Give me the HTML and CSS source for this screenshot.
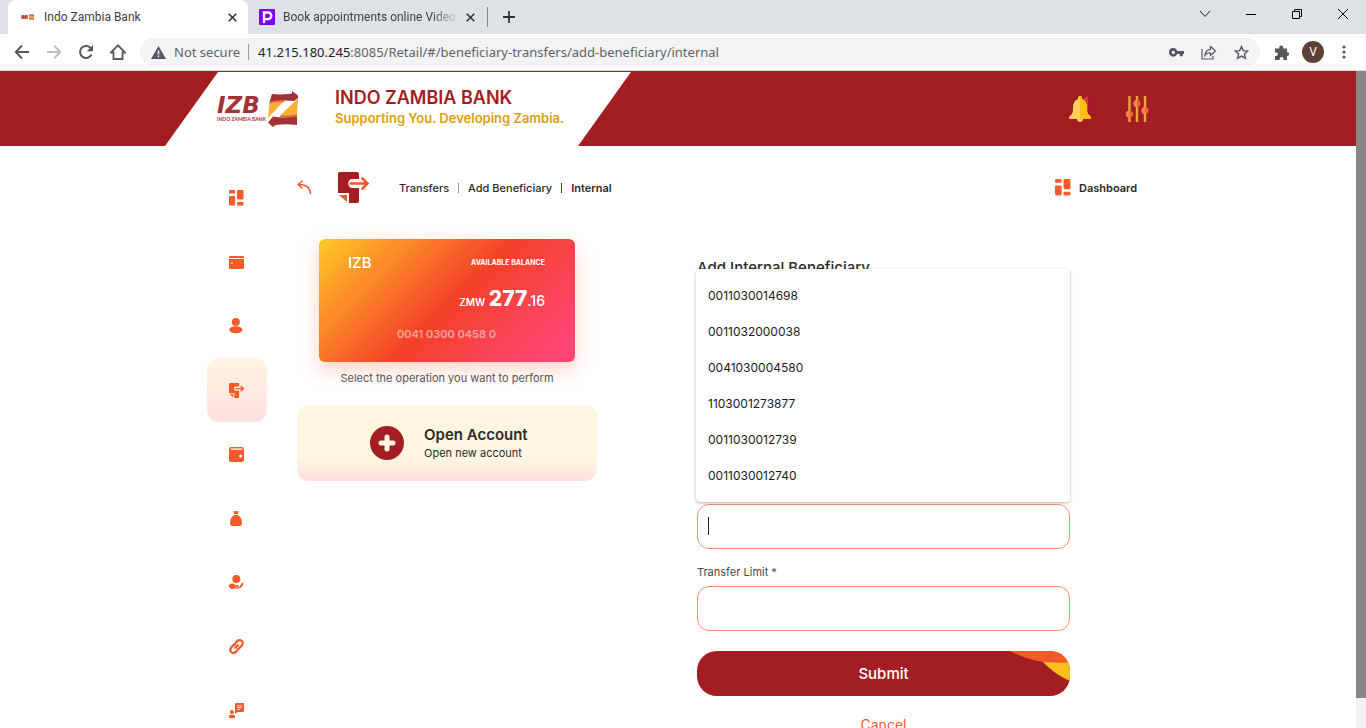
FILE: index.html
```html
<!DOCTYPE html>
<html lang="en">
<head>
<meta charset="utf-8">
<title>Indo Zambia Bank</title>
<link rel="stylesheet" href="styles.css">
</head>
<body>
<svg class="defs" aria-hidden="true">
  <symbol id="dash" viewBox="0 0 15 16"><rect width="6.2" height="3.6" rx="1.2"/><rect y="6" width="6.2" height="9.6" rx="1.4"/><rect x="8" width="6.5" height="9.6" rx="1.4"/><rect x="8" y="12" width="6.5" height="3.6" rx="1.2"/></symbol>
  <symbol id="izb" viewBox="0 0 31 36">
    <path fill="#a33236" d="M4 3Q13 4 24 2.500V0L30 4.500V7L26 10Q14 8.500 1.500 11z"/>
    <path fill="#fbb034" d="M1.500 12Q8 10.500 15 11L0 27z"/>
    <path fill="#ee6036" d="M1.500 10.600Q12 8.500 17 9.600L15.500 11.200Q8 10.800 1.500 12.400z"/>
    <path fill="#fbb034" d="M30 7.500L29 24Q20 25.500 12 24.500z"/>
    <path fill="#ee6036" d="M13 24.200Q20 25.300 29 23.600v1.800Q20 27 11.500 26z"/>
    <path fill="#a33236" d="M29 25.400V34Q18 32.500 7.500 34L5 36 0 31.500 5 25.500Q16 27.500 29 25.400z"/>
  </symbol>
</svg>

<div class="tabstrip">
  <div class="tab tab-active">
    <svg class="fav" viewBox="0 0 16 16"><path d="M1 6h7v4H1z" fill="#d98c86"/><path d="M2 8h5M3 6v4M6 6v4" stroke="#a33236"/><path d="M9 6h5v4H9z" fill="#f3a43a"/><path d="M9 6h5M9 10h5" stroke="#b8383a"/></svg>
    <span class="tab-title">Indo Zambia Bank</span>
    <button class="icon-btn" title="Close"><svg width="9" height="9" viewBox="0 0 9 9"><path d="M.7.7l7.600 7.600M8.300.7L.7 8.300" stroke="#333" stroke-width="1.600"/></svg></button>
  </div>
  <div class="tab">
    <svg class="fav" viewBox="0 0 16 16"><rect width="16" height="16" rx="1" fill="#7b00f8"/><path d="M5 14V3.500h4a3.300 3.300 0 010 6.600H5" fill="none" stroke="#fff" stroke-width="2.400"/></svg>
    <span class="tab-title tab-fade">Book appointments online Video</span>
    <button class="icon-btn" title="Close"><svg width="9" height="9" viewBox="0 0 9 9"><path d="M.7.7l7.600 7.600M8.300.7L.7 8.300" stroke="#333" stroke-width="1.600"/></svg></button>
  </div>
  <span class="tab-sep"></span>
  <button class="icon-btn new-tab" title="New tab"><svg width="12" height="12" viewBox="0 0 12 12"><path d="M6 0v12M0 6h12" stroke="#333" stroke-width="1.800"/></svg></button>
  <div class="win">
    <button class="icon-btn" title="Tabs"><svg width="12" height="12" viewBox="0 0 12 12"><path d="M1 3l5 5.500L11 3" fill="none" stroke="#222"/></svg></button>
    <button class="icon-btn" title="Minimize"><svg width="12" height="12" viewBox="0 0 12 12"><path d="M1 6.500h10" stroke="#000"/></svg></button>
    <button class="icon-btn" title="Restore"><svg width="12" height="12" viewBox="0 0 12 12"><path d="M1.500 3.500h7v7h-7zM3.500 3V1.500h7v7H9" fill="none" stroke="#000"/></svg></button>
    <button class="icon-btn" title="Close"><svg width="12" height="12" viewBox="0 0 12 12"><path d="M1 1l10 10M11 1L1 11" stroke="#000"/></svg></button>
  </div>
</div>

<div class="toolbar">
  <button class="icon-btn" title="Back"><svg width="16" height="16" viewBox="0 0 16 16"><path d="M15 8H2M8 1.500L1.800 8 8 14.500" fill="none" stroke="#55585c" stroke-width="1.900"/></svg></button>
  <button class="icon-btn" title="Forward"><svg width="16" height="16" viewBox="0 0 16 16"><path d="M1 8h13M8 1.500L14.200 8 8 14.500" fill="none" stroke="#bbbdc0" stroke-width="1.900"/></svg></button>
  <button class="icon-btn" title="Reload"><svg width="16" height="16" viewBox="0 0 16 16"><path d="M13.500 10.500A6 6 0 1112.300 3.700L13.500 5" fill="none" stroke="#55585c" stroke-width="2"/><path d="M15 1v6.200H8.800z" fill="#55585c"/></svg></button>
  <button class="icon-btn" title="Home"><svg width="16" height="16" viewBox="0 0 16 16"><path d="M1 8.500L8 1.400l7 7.100h-2.500V15h-9V8.500z" fill="none" stroke="#55585c" stroke-width="1.800"/></svg></button>
  <div class="omnibox">
    <svg width="15" height="13" viewBox="0 0 15 13"><path d="M7.500 0L15 13H0z" fill="#55585c"/><path d="M7.500 4.500v4M7.500 9.600v1.600" stroke="#f1f3f4" stroke-width="1.500"/></svg>
    <span class="secure">Not secure</span>
    <span class="url"><b>41.215.180.245</b>:8085/Retail/#/beneficiary-transfers/add-beneficiary/internal</span>
    <span class="omni-icons">
      <svg width="15" height="9" viewBox="0 0 15 9"><path fill="#55585c" fill-rule="evenodd" d="M4.300 0a4.200 4.200 0 013.900 3H15v3h-1.200v2.300h-3V6H8.200A4.300 4.300 0 114.300 0zm0 2.700a1.700 1.700 0 100 3.400 1.700 1.700 0 000-3.400z"/></svg>
      <svg width="16" height="15" viewBox="0 0 16 15"><path d="M1 4v10h11v-3M9.500 1.500L14.500 6l-5 4.500V8Q6 7.700 3.800 10.500 4.500 5 9.500 4.300z" fill="none" stroke="#55585c" stroke-width="1.200"/></svg>
      <svg width="15" height="15" viewBox="0 0 15 15"><path d="M7.500 1.500l1.800 4.100 4.500.4-3.400 3 1 4.400-3.900-2.300-3.900 2.300 1-4.400-3.400-3 4.500-.4z" fill="none" stroke="#55585c" stroke-width="1.400"/></svg>
    </span>
  </div>
  <svg class="ext" width="15" height="15" viewBox="0 0 15 15"><path fill="#55585c" d="M1 3.500h4.300V2.300a1.900 1.900 0 013.800 0v1.200H13v3.800h.3a1.800 1.800 0 010 3.600H13V15H9.500v-1a1.900 1.900 0 00-3.800 0v1H1v-4h1a1.800 1.800 0 000-3.600H1z"/></svg>
  <span class="avatar">V</span>
  <button class="icon-btn dots" title="Menu"><svg width="4" height="14" viewBox="0 0 4 14" fill="#55585c"><circle cx="2" cy="2" r="1.600"/><circle cx="2" cy="7" r="1.600"/><circle cx="2" cy="12" r="1.600"/></svg></button>
</div>

<div class="viewport">
  <div class="page">
    <header class="header">
      <div class="wrap header-row">
        <div class="brand">
          <div class="logo">
            <div class="logo-text"><span class="logo-big">IZB</span><span class="logo-small">INDO ZAMBIA BANK</span></div>
            <svg width="31" height="36"><use href="#izb"/></svg>
          </div>
          <div><div class="brand-name">INDO ZAMBIA BANK</div><div class="brand-tag">Supporting You. Developing Zambia.</div></div>
        </div>
        <div class="header-icons">
          <button class="icon-btn" title="Notifications"><svg width="27" height="27" viewBox="0 0 27 27"><circle cx="19" cy="7" r="6.500" fill="#a7152d"/><path d="M19 .5a6.500 6.500 0 000 13z" fill="#d03a45"/><path fill="#ffd05a" d="M11 0q2 0 2 2v1q5 2 5 9 0 6 2 7 2 1 2 4H0q0-3 2-4 2-1 2-7 0-7 5-9V2q0-2 2-2z"/><path fill="#fdc010" d="M11 0q2 0 2 2v1q5 2 5 9 0 6 2 7 2 1 2 4H11z"/><path fill="#ffd05a" d="M8 23h6q0 3-3 3t-3-3z"/></svg></button>
          <button class="icon-btn" title="Settings"><svg width="23" height="27" viewBox="0 0 23 27"><path d="M3.500 0v26M11 0v26M19 0v26" stroke="#e9a63b" stroke-width="2.400"/><g fill="#f4632f"><circle cx="3.500" cy="18" r="3.500"/><circle cx="11" cy="7.500" r="3.500"/><circle cx="19" cy="14.500" r="3.500"/></g><path fill="#ff8558" d="M3.500 14.500a3.500 3.500 0 000 7zM11 4a3.500 3.500 0 000 7zM19 11a3.500 3.500 0 000 7z"/></svg></button>
        </div>
      </div>
    </header>

    <div class="wrap body">
      <nav class="side">
        <a href="#" title="Dashboard"><svg width="15" height="16"><use href="#dash"/></svg></a>
        <a href="#"><svg width="15" height="13" viewBox="0 0 15 13"><path d="M1.200 0h12.600Q15 0 15 1.300V2H0v-.7Q0 0 1.200 0z"/><path fill-rule="evenodd" d="M0 3h15v8.700Q15 13 13.800 13H1.200Q0 13 0 11.700zm2.200 3.500v1.200h1.600V6.500z"/></svg></a>
        <a href="#"><svg width="15" height="16" viewBox="0 0 15 16"><circle cx="6.800" cy="4" r="4"/><ellipse cx="6.800" cy="11.800" rx="6.600" ry="3.500"/></svg></a>
        <a href="#" class="active" title="Transfers"><svg width="15" height="15" viewBox="0 0 31 31"><path d="M2 0h17q2 0 2 2v5h-8a5 5 0 000 9h8v13q0 2-2 2h-8V21H0V2Q0 0 2 0z"/><path d="M1 23h8v7z"/><path d="M13 11.500h16M24 6l6 5.500-6 5.500" fill="none" stroke="#f15a29" stroke-width="2.800"/></svg></a>
        <a href="#"><svg width="15" height="15" viewBox="0 0 15 15"><rect width="15" height="15" rx="2"/><path d="M2 1.300h11.500v1.700H1.500z" fill="#ffd7c9"/><circle cx="11.600" cy="9" r="1.500" fill="#fff"/></svg></a>
        <a href="#"><svg width="15" height="15" viewBox="0 0 15 15"><path d="M4 0q1.500.8 3 0 1.500.8 3 0L8.600 3.200H5.400zM5 4h4q4 2.500 4 8 0 3-2.500 3h-7Q1 15 1 12q0-5.500 4-8z"/></svg></a>
        <a href="#"><svg width="15" height="15" viewBox="0 0 15 15"><circle cx="7.300" cy="4" r="4"/><path d="M0 10q2-2 4.300-1.300L6.500 10h3q1 .8-.2 1.700H6v.5h4L13 8q1.800-.6 1.500.6-1.500 4.500-4.500 5H5l-2 1L0 12z"/></svg></a>
        <a href="#"><svg width="15" height="15" viewBox="0 0 15 15" fill="none" stroke="#f15a29" stroke-width="2.300"><path d="M5.500 9.500l4-4M6.300 4l2-1.900a3 3 0 014.500 4.400L10 9.300a3 3 0 01-2 .8M8.700 11l-2 1.900A3 3 0 012.200 8.500L5 5.700a3 3 0 012-.8"/></svg></a>
        <a href="#"><svg width="15" height="15" viewBox="0 0 15 15"><path d="M7 0h7q1 0 1 1v7q0 1-1 1H8.500L6 11V1q0-1 1-1z"/><circle cx="2.900" cy="9" r="2"/><path d="M0 15v-1.600Q0 11.500 3 11.500t3 2V15z"/><path d="M8 2.800h5M8 4.600h5M8 6.400h3" stroke="#fff" stroke-width=".8"/></svg></a>
      </nav>

      <main class="content">
        <div class="crumb-row">
          <button class="icon-btn" title="Back"><svg width="15" height="15" viewBox="0 0 15 15"><path d="M5.500.8L1 4.500l4.500 4M1 4.500Q13 4 13.500 14" fill="none" stroke="#f15a29" stroke-width="1.400"/></svg></button>
          <svg class="page-icon" width="31" height="31" viewBox="0 0 31 31"><path fill="#a31e22" d="M2 0h17q2 0 2 2v5h-8a5 5 0 000 9h8v13q0 2-2 2h-8V21H0V2Q0 0 2 0z"/><path fill="#f15a29" d="M1 23h8v7z"/><path d="M12.500 11.500H29M24.500 6.500l5 5-5 5" fill="none" stroke="#f15a29" stroke-width="2.600" stroke-linecap="round"/></svg>
          <nav class="crumbs"><a href="#">Transfers</a><i></i><a href="#">Add Beneficiary</a><i class="dark"></i><b>Internal</b></nav>
          <a href="#" class="dash-link"><svg width="16" height="17"><use href="#dash"/></svg>Dashboard</a>
        </div>

        <div class="columns">
          <section class="left">
            <div class="card">
              <div class="card-top"><span class="card-name">IZB</span><span class="card-label">AVAILABLE BALANCE</span></div>
              <div class="balance"><small>ZMW</small> <strong>277</strong><span>.16</span></div>
              <div class="number">0041 0300 0458 0</div>
            </div>
            <p class="hint">Select the operation you want to perform</p>
            <button class="open">
              <svg width="34" height="34" viewBox="0 0 34 34"><circle cx="17" cy="17" r="17" fill="#a31e22"/><path d="M17 11v12M11 17h12" stroke="#fff6e3" stroke-width="5" stroke-linecap="round"/></svg>
              <span><strong>Open Account</strong><span>Open new account</span></span>
            </button>
          </section>

          <form class="form">
            <h1 id="form-title">Add Internal Beneficiary</h1>
            <div class="field">
              <input type="text" aria-labelledby="form-title" autocomplete="off">
              <span class="caret"></span>
              <ul class="suggest">
                <li>0011030014698</li><li>0011032000038</li><li>0041030004580</li><li>1103001273877</li><li>0011030012739</li><li>0011030012740</li>
              </ul>
            </div>
            <label for="limit">Transfer Limit *</label>
            <input id="limit" type="text">
            <button type="button" class="submit">
              <svg width="60" height="45" viewBox="0 0 60 45"><path d="M32 10Q44 23 60 30V0H32z" fill="#fec01f"/><path d="M0 0Q28 15 60 11V0z" fill="#f15a29"/></svg>
              <span>Submit</span>
            </button>
            <button type="button" class="cancel">Cancel</button>
          </form>
        </div>
      </main>
    </div>
  </div>
  <div class="scroll"><div class="thumb"></div></div>
</div>
</body>
</html>
```
FILE: styles.css
```css
* { box-sizing: border-box; }
body {
  margin: 0;
  height: 100vh;
  display: flex;
  flex-direction: column;
  overflow: hidden;
  background: #fff;
  color: #2a2a2a;
  font-family: Inter, sans-serif;
  font-size: 11px;
}
a { color: inherit; text-decoration: none; }
svg { display: block; flex: none; }
.defs { position: absolute; width: 0; height: 0; }
.icon-btn { display: flex; align-items: center; justify-content: center; padding: 0; border: 0; background: none; }

/* browser frame */
.tabstrip, .toolbar { display: flex; align-items: center; flex: none; font-family: "Noto Sans", sans-serif; }
.tabstrip { height: 34px; padding-left: 8px; background: #dee1e6; font-family: Roboto, sans-serif; font-size: 12px; color: #3c4043; }
.tab { display: flex; align-items: center; width: 239px; height: 34px; padding: 0 12px 0 11px; gap: 8px; }
.tab-active { width: 240px; padding: 0 11px 0 12px; background: #fff; border-radius: 8px 8px 0 0; }
.fav { width: 16px; height: 16px; }
.tab-title { flex: 1; white-space: nowrap; overflow: hidden; }
.tab-fade { mask-image: linear-gradient(to right, #000 85%, transparent); }
.tab-sep { width: 1px; height: 20px; background: #85888c; }
.new-tab { margin-left: 15px; }
.win { display: flex; gap: 34px; margin-left: auto; padding: 0 17px 6px 0; }
.toolbar { height: 37px; padding: 0 20px 0 14px; border-bottom: 1px solid #d8dbdb; gap: 16px; }
.omnibox { display: flex; align-items: center; flex: 1; height: 28px; padding: 0 11px; margin-left: -2px; border-radius: 14px; background: #f1f3f4; color: #5f6368; font-size: 13px; white-space: nowrap; }
.secure { margin-left: 8px; padding-right: 8px; border-right: 1px solid #9a9da1; line-height: 16px; }
.url { margin-left: 9px; }
.url b { font-weight: 400; color: #202124; }
.omni-icons { display: flex; align-items: center; gap: 17px; margin-left: auto; }
.ext { margin-left: -2px; }
.avatar { width: 22px; height: 22px; margin-left: -3px; border-radius: 50%; background: #5d4037; color: #fff; text-align: center; line-height: 22px; font-size: 12px; }
.dots { margin-left: 2px; }

.viewport { display: flex; flex: 1; min-height: 0; }
.page { flex: 1; overflow: hidden; }
.scroll { width: 10px; padding-bottom: 30px; background: #f1f1f1; }
.thumb { height: 100%; background: #888; }
.wrap { width: 100%; max-width: 942px; margin: 0 auto; }

.header { padding-top: 1px; background: #a31e22; }
.header-row { display: flex; justify-content: space-between; align-items: center; }
.brand { display: flex; align-items: center; gap: 35px; width: 466px; height: 74px; margin-left: -42px; padding-left: 52px; background: #fff; clip-path: polygon(53px 0, 100% 0, 413px 100%, 0 100%); }
.logo { display: flex; align-items: center; gap: 3px; width: 83px; color: #a33236; white-space: nowrap; }
.logo-text { display: flex; flex-direction: column; width: 48px; }
.logo-big { font: oblique 700 23px/20px "DejaVu Sans", sans-serif; }
.logo-small { font: 700 5px/8px Lato, sans-serif; }
.brand-name { color: #a31e22; font-size: 18px; font-weight: 600; line-height: 20px; }
.brand-tag { color: #e09e12; font-size: 13px; font-weight: 600; line-height: 20px; padding-bottom: 2px; }
.header-icons { display: flex; gap: 30px; }

.body { display: flex; gap: 30px; padding-top: 20px; }
.side { width: 60px; }
.side a { display: flex; align-items: center; height: 64px; padding-left: 22px; border-radius: 12px; fill: #f15a29; }
.side .active { background: linear-gradient(#fff5e1, #ffe0e0); }
.content { flex: 1; }
.crumb-row { display: flex; align-items: center; height: 43px; padding-right: 12px; font-weight: 500; }
.page-icon { margin-left: 26px; }
.crumbs { display: flex; align-items: center; margin-left: 30px; }
.crumbs i { width: 1px; height: 10px; margin: 0 9px; background: #999; }
.crumbs .dark { background: #a31e22; }
.crumbs b, .dash-link { font-weight: 600; }
.dash-link { display: flex; align-items: center; gap: 8px; margin-left: auto; }
.dash-link svg { fill: #f15a29; }

.columns { display: flex; gap: 100px; padding: 30px 79px 0 0; }
.left { width: 300px; }
.card { height: 123px; margin: 0 22px; padding: 15px 30px 0 29px; border-radius: 6px; color: #fff; background: linear-gradient(135deg, #ffca28, #f44028 52%, #ff4674 92%); box-shadow: 0 8px 20px rgba(255, 80, 30, .25); font-weight: 600; }
.card-top { display: flex; justify-content: space-between; align-items: center; height: 17px; }
.card-name { font-size: 15px; font-weight: 500; }
.card-label { font-size: 7px; font-weight: 700; }
.balance { margin-top: 16px; text-align: right; line-height: 24px; font-size: 14px; font-weight: 500; }
.balance small { font-size: 10px; font-weight: 600; }
.balance strong { font-size: 21px; font-weight: 800; }
.number { margin-top: 12px; text-align: center; color: rgba(255, 255, 255, .5); font-size: 11px; line-height: 16px; }
.hint { margin: 8px 0 19px; text-align: center; line-height: 16px; color: #555; }
.open { display: flex; align-items: center; gap: 20px; width: 100%; height: 76px; padding: 0 0 0 73px; border: 0; border-radius: 12px; background: linear-gradient(#fff5e1 70%, #ffe0e0); color: #2a2a2a; font: 11px/16px Inter, sans-serif; text-align: left; }
.open strong { display: block; font-size: 15px; font-weight: 600; line-height: 20px; }

.form { flex: 1; padding-top: 19px; }
.form h1 { margin: 0 0 226px; font-size: 15px; font-weight: 500; line-height: 20px; }
.field { position: relative; }
.form input { display: block; width: 100%; height: 45px; padding: 0 11px; border: 1px solid #f9936f; border-radius: 12px; outline: 0; background: #fff; font: 13px Inter, sans-serif; }
.form label { display: block; margin: 15px 0 6px; line-height: 16px; color: #4a4a4a; }
.caret { position: absolute; left: 11px; top: 13px; width: 1px; height: 18px; background: #222; }
.suggest { position: absolute; left: -1px; right: 0; bottom: calc(100% + 2px); margin: 0; padding: 9px 12px 8px; list-style: none; border-radius: 4px; background: #fff; box-shadow: 0 1px 3px rgba(0, 0, 0, .3); font-size: 12px; line-height: 36px; color: #1b1b1b; }
.submit { position: relative; display: block; width: 100%; height: 45px; margin-top: 20px; border: 0; border-radius: 20px; overflow: hidden; background: #a31e22; color: #fff; font: 500 15px Inter, sans-serif; }
.submit svg { position: absolute; top: 0; right: 0; }
.cancel { display: block; margin: 19px auto 0; padding: 0; border: 0; background: none; color: #f15a29; font: 14px/20px Inter, sans-serif; }
```
